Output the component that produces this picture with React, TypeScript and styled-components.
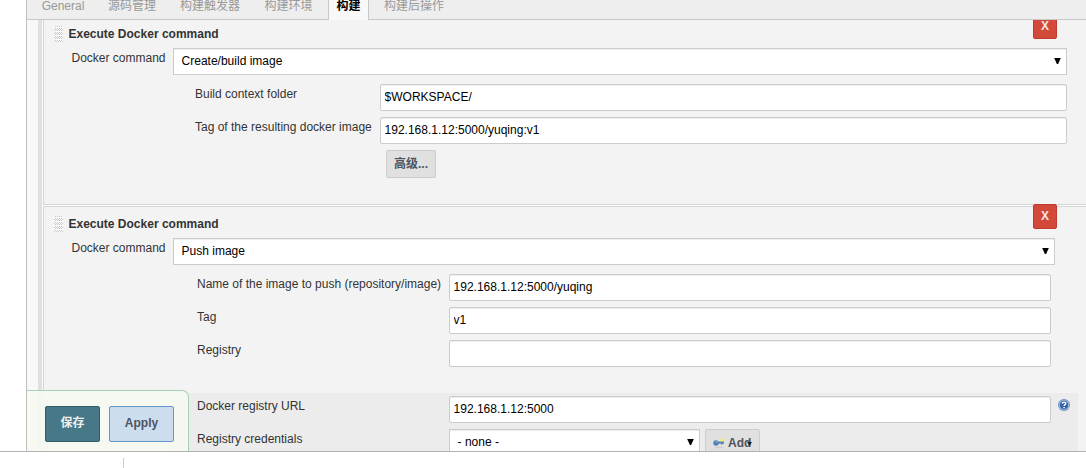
import React from 'react';
import styled, { createGlobalStyle, css } from 'styled-components';

const Global = createGlobalStyle`
  * { box-sizing: border-box; }
  body {
    margin: 0;
    background: #fff;
    color: #333;
    font: 12px/14px "Liberation Sans", "Noto Sans CJK SC", Arial, sans-serif;
  }
`;

const Page = styled.div`
  height: 468px;
  overflow: hidden;
`;

const Viewport = styled.div`
  position: relative;
  height: 452px;
  padding-left: 26px;
  border-bottom: 1px solid #b2b2b2;
  overflow: hidden;
`;

const Panel = styled.div`
  height: 451px;
  display: flex;
  flex-direction: column;
  border-left: 1px solid #bfbfbf;
  background: #f8f8f8;
`;

const TabBar = styled.nav`
  display: flex;
  flex: none;
  height: 20px;
  background: #eee;
  border-bottom: 1px solid #c8c8c8;
`;

const Tab = styled.a<{ $width: number; $active?: boolean }>`
  width: ${p => p.$width}px;
  height: 20px;
  line-height: 12px;
  text-align: center;
  color: #999;
  white-space: nowrap;
  ${p => p.$active && css`
    background: #f8f8f8;
    border: solid #c8c8c8;
    border-width: 0 1px;
    color: #000;
    font-weight: bold;
  `}
`;

const Steps = styled.main`
  flex: 1;
  min-height: 0;
  margin-left: 11px;
  padding-left: 1px;
  border-left: 4px solid #e0e0e0;
  background: #fbfbfb;
  overflow: hidden;
`;

const Step = styled.section<{ $height: number; $first?: boolean }>`
  height: ${p => p.$height}px;
  margin-bottom: 1px;
  border: 1px solid #d6d6d6;
  border-right: 0;
  ${p => p.$first && 'border-top: 0;'}
  background: #f3f3f3;
`;

const StepHeader = styled.header<{ $first?: boolean }>`
  display: flex;
  height: ${p => (p.$first ? 28 : 31)}px;
  padding: ${p => (p.$first ? 6 : 9)}px 29px 0 9.5px;
`;

const Handle = styled.svg`
  width: 9px;
  height: 16px;
`;

const StepTitle = styled.b`
  margin: 1px auto 0 6px;
`;

const Remove = styled.button`
  width: 24px;
  height: 25px;
  margin-top: -12px;
  padding: 0 0 1px;
  border: 1px solid #c03a2b;
  border-radius: 2px;
  background: #d24939;
  color: #f3e4e2;
  font: bold 12px "Liberation Sans", Arial, sans-serif;
`;

const Row = styled.div<{ $indent: number; $label: number; $gap?: number }>`
  display: grid;
  grid-template-columns: ${p => p.$label}px auto;
  justify-content: start;
  padding-left: ${p => p.$indent}px;
  margin-bottom: ${p => p.$gap ?? 6}px;
`;

const Label = styled.label`
  padding-top: 3px;
  white-space: nowrap;
`;

const Controls = styled.div`
  display: flex;
`;

const Field = styled.input<{ $width: number }>`
  width: ${p => p.$width}px;
  height: 27px;
  padding: 0 4px 1px 3.6px;
  border: 1px solid #ccc;
  border-radius: 2px;
  background: #fff;
  box-shadow: inset 0 1px 1px rgba(0, 0, 0, 0.075);
  color: #000;
  font: inherit;
`;

const SelectBox = styled.div<{ $width: number }>`
  display: flex;
  justify-content: space-between;
  align-items: center;
  width: ${p => p.$width}px;
  height: 27px;
  padding: 0 5px 1px 7.6px;
  border: 1px solid #ccc;
  background: #fff;
  box-shadow: inset 0 1px 1px rgba(0, 0, 0, 0.075);
  color: #000;
`;

const Select = ({ width, value }: { width: number; value: string }) => (
  <SelectBox $width={width}>
    {value}
    <svg width="7" height="6" viewBox="0 0 7 6"><path d="M.2 0h6.6L4.1 6H2.9z" /></svg>
  </SelectBox>
);

const GreyButton = styled.button<{ $width: number; $height: number }>`
  display: flex;
  align-items: center;
  justify-content: center;
  width: ${p => p.$width}px;
  height: ${p => p.$height}px;
  padding: 0;
  border: 1px solid #ccc;
  border-radius: 2px;
  background: #e0e0e0;
  color: #4d545d;
  font: bold 12px "Liberation Sans", "Noto Sans CJK SC", Arial, sans-serif;
`;

const AdvancedButton = styled(GreyButton)`
  margin-left: 342px;
  padding-bottom: 3px;
`;

const AddButton = styled(GreyButton)`
  position: relative;
  justify-content: flex-start;
  gap: 3px;
  margin-left: 5px;
  padding-left: 7px;
`;

const AddArrow = styled.svg`
  position: absolute;
  left: 41px;
  top: 11px;
`;

const Shaded = styled.div`
  width: 905px;
  height: 70px;
  margin: 26px 0 0 129px;
  padding-top: 3px;
  background: #ececec;
`;

const Help = styled.svg`
  margin: 3px 0 0 7px;
`;

const SaveBar = styled.div`
  position: absolute;
  left: 27px;
  top: 390px;
  width: 162px;
  height: 62px;
  display: flex;
  gap: 9px;
  padding: 15px 0 0 18px;
  border: 1px solid #a8cfb8;
  border-width: 1px 1px 0 0;
  border-top-right-radius: 7px;
  background: rgba(246, 250, 241, 0.9);
`;

const BarButton = styled.button<{ $width: number; $primary?: boolean }>`
  width: ${p => p.$width}px;
  height: 36px;
  padding: 0 0 ${p => (p.$primary ? 5 : 2)}px;
  border: 1px solid ${p => (p.$primary ? '#33596a' : '#6496c8')};
  border-radius: 2px;
  background: ${p => (p.$primary ? '#467888' : '#ccdded')};
  color: ${p => (p.$primary ? '#eee' : '#4d545d')};
  font: bold 12px "Liberation Sans", "Noto Sans CJK SC", Arial, sans-serif;
`;

const Footer = styled.footer`
  width: 124px;
  height: 10px;
  margin-top: 6px;
  border-right: 1px solid #ccc;
`;

const DragHandle = () => (
  <Handle viewBox="0 0 9 16">
    <path d="M0 0h9v16H0z" fill="#fafafa" />
    <path
      d="M1.5 0v16M3.5 0v16M5.5 0v16M7.5 0v16"
      stroke="#c3c3c3"
      strokeDasharray="1 1"
      shapeRendering="crispEdges"
    />
    <path
      d="M0 3.5h9M0 7.5h9M0 11.5h9M0 15.5h9"
      stroke="#cfcfcf"
      strokeDasharray="1 1"
      shapeRendering="crispEdges"
    />
  </Handle>
);

export default function App() {
  return (
    <Page>
      <Global />
      <Viewport>
        <Panel>
          <TabBar>
            <Tab $width={72}>General</Tab>
            <Tab $width={66}>源码管理</Tab>
            <Tab $width={90}>构建触发器</Tab>
            <Tab $width={67}>构建环境</Tab>
            <Tab $width={6} />
            <Tab $width={41} $active>构建</Tab>
            <Tab $width={90}>构建后操作</Tab>
          </TabBar>
          <Steps>
            <Step $height={185} $first>
              <StepHeader $first>
                <DragHandle />
                <StepTitle>Execute Docker command</StepTitle>
                <Remove>X</Remove>
              </StepHeader>
              <Row $indent={27.5} $label={101.5} $gap={9}>
                <Label>Docker command</Label>
                <Select width={894} value="Create/build image" />
              </Row>
              <Row $indent={151} $label={185}>
                <Label>Build context folder</Label>
                <Field $width={687} defaultValue="$WORKSPACE/" />
              </Row>
              <Row $indent={151} $label={185}>
                <Label>Tag of the resulting docker image</Label>
                <Field $width={687} defaultValue="192.168.1.12:5000/yuqing:v1" />
              </Row>
              <AdvancedButton $width={50} $height={28}>高级...</AdvancedButton>
            </Step>
            <Step $height={260}>
              <StepHeader>
                <DragHandle />
                <StepTitle>Execute Docker command</StepTitle>
                <Remove>X</Remove>
              </StepHeader>
              <Row $indent={27.5} $label={101.5} $gap={9}>
                <Label>Docker command</Label>
                <Select width={882} value="Push image" />
              </Row>
              <Row $indent={153} $label={252}>
                <Label>Name of the image to push (repository/image)</Label>
                <Field $width={602} defaultValue="192.168.1.12:5000/yuqing" />
              </Row>
              <Row $indent={153} $label={252}>
                <Label>Tag</Label>
                <Field $width={602} defaultValue="v1" />
              </Row>
              <Row $indent={153} $label={252} $gap={0}>
                <Label>Registry</Label>
                <Field $width={602} />
              </Row>
              <Shaded>
                <Row $indent={24} $label={252}>
                  <Label>Docker registry URL</Label>
                  <Controls>
                    <Field $width={602} defaultValue="192.168.1.12:5000" />
                    <Help width="12" height="12" viewBox="0 0 12 12">
                      <circle cx="6" cy="6" r="6" fill="#6f8fc0" />
                      <circle cx="6" cy="6" r="5.1" fill="#c3d3ea" />
                      <circle cx="6" cy="6" r="4.4" fill="#3463ab" />
                      <path d="M4.2 4.6C4.3 2.6 7.8 2.7 7.8 4.6C7.8 5.7 6.1 5.7 6.1 7M6.1 8v1.3" fill="none" stroke="#fff" strokeWidth="1.4" />
                    </Help>
                  </Controls>
                </Row>
                <Row $indent={24} $label={252}>
                  <Label>Registry credentials</Label>
                  <Controls>
                    <Select width={251} value="- none -" />
                    <AddButton $width={55} $height={28}>
                      <svg width="12" height="12" viewBox="0 0 12 12">
                        <ellipse cx="6" cy="10.5" rx="4" ry=".7" fill="#ccc" />
                        <circle cx="9" cy="3.2" r="1.8" fill="#f5e967" />
                        <path d="M4 4.6h7v2.2H9.6v.8H8v-.8H4z" fill="#5687bd" />
                        <circle cx="3" cy="6" r="2.7" fill="#4b7db5" />
                        <path d="M2 5h3" stroke="#8db1d6" />
                      </svg>
                      Add
                      <AddArrow width="5" height="5" viewBox="0 0 5 5"><path d="M0 1h5L2.5 5z" fill="#222" /></AddArrow>
                    </AddButton>
                  </Controls>
                </Row>
              </Shaded>
            </Step>
          </Steps>
        </Panel>
        <SaveBar>
          <BarButton $width={55} $primary>保存</BarButton>
          <BarButton $width={65}>Apply</BarButton>
        </SaveBar>
      </Viewport>
      <Footer />
    </Page>
  );
}
